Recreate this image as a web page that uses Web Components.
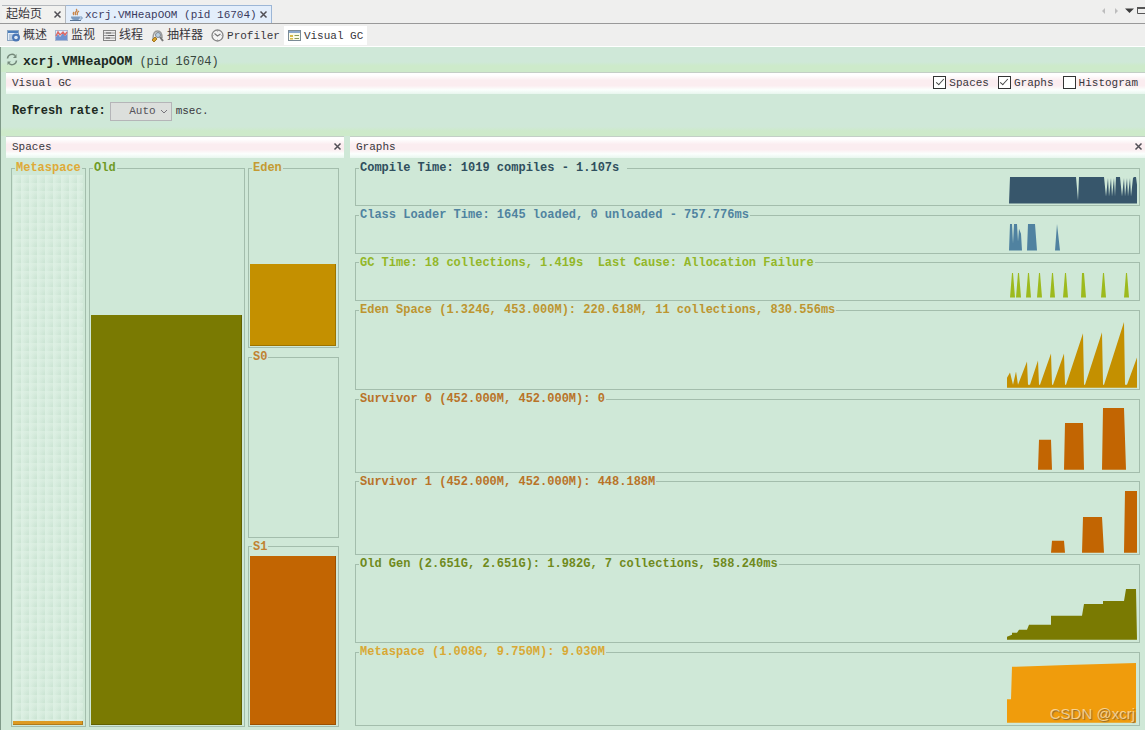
<!DOCTYPE html>
<html lang="zh-CN">
<head>
<meta charset="utf-8">
<title>VisualVM</title>
<style>
  html, body { margin: 0; height: 100%; }
  body {
    font: 11px/14px "Liberation Mono", "Noto Sans CJK SC", monospace;
    color: #38363c;
    background: #cfe8d7;
    --line: #a3bdac;
    --page: #cfe8d7;
  }
</style>
</head>
<body>
<vm-app></vm-app>

<script>
const define = (name, html, setup) => {
  const template = document.createElement('template');
  template.innerHTML = html;
  customElements.define(name, class extends HTMLElement {
    constructor() {
      super();
      this.attachShadow({ mode: 'open' }).append(template.content.cloneNode(true));
    }
    connectedCallback() { if (setup) setup(this, this.shadowRoot); }
  });
};

const ICONS = {
  java: '<path d="M1 8.500h9c0 3-1 3.500-4 3.500S1 11.500 1 8.500z" fill="#7d9cc0"/><path d="M0 12.500h11" stroke="#5a7595"/><path d="M10 9h2v2h-2" fill="none" stroke="#7d9cc0"/><path d="M6 1c3 2-3 3 0 6M9 3C6 5 8 6 7 7M4 4c-1 1-1 2 0 3" fill="none" stroke="#c98548" stroke-width="1.300"/>',
  overview: '<rect x=".5" y="1.500" width="11" height="10" fill="#e4edf8" stroke="#8ba5c2"/><path d="M1 3h10" stroke="#4c7dbb" stroke-width="2"/><path d="M2 6h4M2 8h3M2 10h3" stroke="#8da6c4"/><circle cx="9" cy="8.500" r="4" fill="#4a76b5"/><circle cx="9" cy="8.500" r="1.800" fill="#dfe9f5"/>',
  monitor: '<rect x=".5" y="1.500" width="12" height="10" fill="#e8eefa" stroke="#a9b8d2"/><path d="M1 11V8l2-3 2 3 3-4 2 3 2-2v6z" fill="#6f91cf"/><path d="M1 7l2-4 2 3 3-3 2 3 2-3" fill="none" stroke="#dc6a67" stroke-width="1.400"/>',
  threads: '<rect x=".5" y="1.500" width="12" height="10" fill="#eee" stroke="#858585"/><path d="M1 4h11M1 6.500h11M1 9h11" stroke="#999"/><path d="M3 4h5M5 6.500h6M3 9h4" stroke="#666"/>',
  sampler: '<path d="M2 10c0-4 1-8 4.500-8S11 6 11 9" fill="#eee" stroke="#999" stroke-width="1.500"/><circle cx="7" cy="6" r="2.500" fill="#bcd0e2" stroke="#7c858e"/><path d="M1 11l3-3 2 2-3 3z" fill="#d7a32e" stroke="#a57722"/><path d="M9 8l3 4" stroke="#777" stroke-width="2"/>',
  profiler: '<circle cx="6.500" cy="6.500" r="5.500" fill="#f4f4f4" stroke="#858585" stroke-width="1.300"/><path d="M3.500 4.500l3 2.500 3-2" fill="none" stroke="#777" stroke-width="1.200"/><path d="M6.500 1.500v1M6.500 10.500v1M1.500 6.500h1M10.500 6.500h1" stroke="#999"/>',
  gc: '<rect x=".5" y="1.500" width="12" height="10" fill="#fafbe8" stroke="#7b8b96"/><path d="M1 3h11" stroke="#8aa8cc" stroke-width="2"/><path d="M2 6h3v2H2zM2 9h3v1.500H2z" fill="#d6b944"/><path d="M6.500 6.500H11M6.500 9.500H11" stroke="#8a9c58"/>',
  refresh: '<path d="M1.500 5.500A4.500 4.500 0 0 1 9 2.500M10.500 7.500A4.500 4.500 0 0 1 3 10.500" fill="none" stroke="#74897a" stroke-width="1.500"/><path d="M10.500 1V5H7zM1.500 12V8.500h3.500z" fill="#74897a"/>',
  close: '<path d="M3.500 3.500l6 6M9.500 3.500l-6 6" stroke="#514f55" stroke-width="1.500"/>',
  left: '<path d="M8 4v6L5 7z" fill="#bdbdbd"/>',
  right: '<path d="M5 4v6l3-3z" fill="#bdbdbd"/>',
  down: '<path d="M2 4.500h9L6.500 9z" fill="#3c3c3c"/>',
  maximize: '<path d="M1.500 4.500h9v5h-9z" fill="none" stroke="#555"/><path d="M1 4h10" stroke="#555" stroke-width="2"/>'
};

define('vm-icon', `
  <style>:host { display: block; width: 13px; height: 13px; flex: none; } svg { display: block; }</style>
  <svg width="13" height="13" viewBox="0 0 13 13" aria-hidden="true"></svg>`,
  (host, root) => { root.querySelector('svg').innerHTML = ICONS[host.getAttribute('name')]; });

define('vm-close', `
  <style>
    :host { display: block; flex: none; }
    button { display: block; border: 0; padding: 0; background: none; }
  </style>
  <button aria-label="Close"><vm-icon name="close"></vm-icon></button>`);

/* Document tab with a close button */
define('vm-doc-tab', `
  <style>
    :host { display: flex; align-items: center; gap: 3px; box-sizing: border-box; padding: 0 1px 0 4px;
      border: solid #b4b8bd; border-width: 1px 1px 0 0; background: #f1f1ef; }
    :host([active]) { gap: 0; background: #e3eefb; border-color: #9cb6d6; color: #3a3a5e; }
    button { display: flex; align-items: center; gap: 2px; border: 0; padding: 0; background: none;
      color: inherit; font: inherit; white-space: nowrap; }
    :host(:not([active])) button { font-size: 12px; padding-right: 6px; }
  </style>
  <button><slot></slot></button><vm-close></vm-close>`);

/* View tab: icon and label */
define('vm-view-tab', `
  <style>
    :host { display: flex; }
    button { display: flex; align-items: center; gap: 3px; border: 0; padding: 0 4px; background: none;
      color: inherit; font: inherit; white-space: nowrap; }
    :host([cjk]) button { font-size: 12px; }
    :host([active]) button { background: #fff; }
  </style>
  <button><vm-icon></vm-icon><slot></slot></button>`,
  (host, root) => {
    const old = root.querySelector('vm-icon');
    const icon = document.createElement('vm-icon');
    icon.setAttribute('name', host.getAttribute('icon'));
    old.replaceWith(icon);
  });

/* Pale title bar shared by the view and its two panels */
define('vm-bar', `
  <style>
    :host { display: flex; align-items: center; justify-content: space-between; height: 22px; box-sizing: border-box;
      padding: 0 0 2px 6px; border-top: 1px solid #c3cfc6;
      background: linear-gradient(#fff 0 10%, #fbedf0 35% 60%, #fbfffd 80%, #e8f6ee); }
    h2 { margin: 0; font: inherit; }
  </style>
  <h2><slot></slot></h2><slot name="end"></slot>`);

define('vm-check', `
  <style>
    :host { display: block; }
    label { display: flex; align-items: center; gap: 3px; }
    input { appearance: none; display: grid; place-items: center; width: 13px; height: 13px; margin: 0;
      border: 1px solid #333; background: #fff; }
    input:checked::after { content: ""; width: 7px; height: 3px; margin-bottom: 3px;
      border: solid #444; border-width: 0 0 1px 1px; transform: rotate(-48deg); }
  </style>
  <label><input type="checkbox"><slot></slot></label>`,
  (host, root) => { root.querySelector('input').checked = host.hasAttribute('checked'); });

/* Titled frame */
define('vm-group', `
  <style>
    :host { display: flex; min-width: 0; min-height: 0; }
    fieldset { flex: 1; display: flex; align-items: flex-end; justify-content: flex-end; min-width: 0; min-height: 0; margin: 0;
      padding: 0 2px 1px 1px; border: 1px solid var(--line); }
    legend { height: 14px; margin-left: 2px; padding: 0 1px; font: bold 12px/14px "Liberation Mono", monospace;
      color: var(--ink); white-space: pre; }
  </style>
  <fieldset><legend></legend><slot></slot></fieldset>`,
  (host, root) => {
    root.querySelector('legend').textContent = host.getAttribute('label');
    host.style.setProperty('--ink', host.getAttribute('ink'));
  });

/* Memory pool: a frame filled up to a level */
define('vm-space', `
  <style>
    :host { display: grid; min-height: 0; min-width: 0; }
    .well { display: flex; align-items: flex-end; width: 100%; height: 100%; }
    :host([reserved]) .well { background: repeating-linear-gradient(#dff1e599 0 1px, transparent 7px 8px),
      repeating-linear-gradient(90deg, #dbefe2 0 1px, #cce5d4 7px 8px); }
    .fill { flex: 1; box-sizing: border-box; border: solid #0003; border-width: 0 1px 1px 0; }
    :host([level="0"]) .fill { border: 0; }
  </style>
  <vm-group><div class="well"><div class="fill"></div></div></vm-group>`,
  (host, root) => {
    const fresh = document.createElement('vm-group');
    fresh.setAttribute('label', host.getAttribute('label'));
    fresh.setAttribute('ink', host.getAttribute('ink'));
    const old = root.querySelector('vm-group');
    fresh.append(...old.childNodes);
    old.replaceWith(fresh);
    const fill = root.querySelector('.fill');
    fill.style.height = host.getAttribute('level') + '%';
    fill.style.background = host.getAttribute('color');
  });

/* History chart */
define('vm-graph', `
  <style>
    :host { display: grid; min-height: 0; min-width: 0; }
    svg { display: block; width: 130px; height: 100%; min-height: 0; }
  </style>`,
  (host, root) => {
    const group = document.createElement('vm-group');
    group.setAttribute('label', host.getAttribute('label'));
    group.setAttribute('ink', host.getAttribute('ink'));
    group.innerHTML = `<svg viewBox="0 0 130 ${host.getAttribute('units')}" preserveAspectRatio="none" aria-hidden="true">
      <path d="${host.getAttribute('path')}" fill="${host.getAttribute('color')}"/></svg>`;
    root.append(group);
  });

define('vm-spaces', `
  <style>
    :host { display: flex; flex-direction: column; min-width: 0; min-height: 0; }
    .pools { flex: 1; min-height: 0; display: grid; grid-template-columns: 75fr 156fr 91fr; gap: 3px; padding: 3px 5px; }
    .young { display: grid; grid-template-rows: repeat(3, 1fr); gap: 2px; min-height: 0; }
  </style>
  <vm-bar>Spaces<vm-close slot="end"></vm-close></vm-bar>
  <div class="pools">
    <vm-space reserved label="Metaspace" ink="#dfaa38" color="#dd9a22" level="0.8"></vm-space>
    <vm-space label="Old" ink="#6f9a25" color="#7a7a02" level="74.500"></vm-space>
    <div class="young">
      <vm-space label="Eden" ink="#c49a32" color="#c49000" level="48"></vm-space>
      <vm-space label="S0" ink="#c08232" color="#c26502" level="0"></vm-space>
      <vm-space label="S1" ink="#c08232" color="#c26502" level="98.500"></vm-space>
    </div>
  </div>`,
  null);

const gcTicks = [5, 11, 21, 32, 45, 58, 76, 96, 119]
  .map((x, i) => `M${x - 2} 28L${x - (i === 6 ? 1 : 0)} 3h${i === 6 ? 2 : 1}L${x + 3} 28z`).join('');

const GRAPHS = [
  ['Compile Time: 1019 compiles - 1.107s ', '#2f4f5e', '#37566b', 30,
   'M2 29L3 2H69L71 26L72 2H97L99 22L101 3L102 22L104 3L105 22L107 3L108 22L109 2H113L115 22L117 3L118 22L120 3L121 22L123 3L124 22L126 3L127 2H129L130 10V29z'],
  ['Class Loader Time: 1645 loaded, 0 unloaded - 757.776ms', '#4f83a0', '#5082a0', 30,
   'M2 29L3 2H5L6 22L7 2H10L11 20L12 7L14 12L15 29zM20 29L21 2H28L30 29zM48 29L50 2L53 29z'],
  ['GC Time: 18 collections, 1.419s  Last Cause: Allocation Failure', '#93b728', '#9dba1d', 30, gcTicks],
  ['Eden Space (1.324G, 453.000M): 220.618M, 11 collections, 830.556ms', '#bd9530', '#c49000', 70,
   'M0 70V60L3 55L6 67L9 54L11 67L20 44L21 67H23L31 43L32 67H33L44 36L45 67H46L57 36L58 67H59L76 16L77 67H78L95 15L96 67H97L117 5L118 67H120L130 40V70z'],
  ['Survivor 0 (452.000M, 452.000M): 0', '#b97328', '#c26502', 65,
   'M31 64L32 34H44L45 64zM57 64L58 17H76L77 64zM95 64L96 2H117L119 64z'],
  ['Survivor 1 (452.000M, 452.000M): 448.188M', '#b97328', '#c26502', 65,
   'M44 64L45 52H57L58 64zM75 64L76 28H95L97 64zM117 64L118 2H130V64z'],
  ['Old Gen (2.651G, 2.651G): 1.982G, 7 collections, 588.240ms', '#6f8a1c', '#7a7a02', 70,
   'M0 69V66L5 64V62H10L12 59H20L22 54H44V45H75L77 33H96V30H117L119 18H129L130 69z'],
  ['Metaspace (1.008G, 9.750M): 9.030M', '#d9a834', '#f09c0c', 66,
   'M0 65V41H4L5 8L60 6L129 4V65z']
];

define('vm-graphs', `
  <style>
    :host { display: flex; flex-direction: column; min-width: 0; min-height: 0; }
    .list { flex: 1; min-height: 0; display: grid; gap: 2px; padding: 3px 5px 4px;
      grid-template-rows: 45fr 45fr 45fr 86fr 80fr 80fr 85fr 80fr; }
  </style>
  <vm-bar>Graphs<vm-close slot="end"></vm-close></vm-bar>
  <div class="list"></div>`,
  (host, root) => {
    for (const [label, ink, color, units, path] of GRAPHS) {
      const graph = document.createElement('vm-graph');
      for (const [key, value] of Object.entries({ label, ink, color, units, path })) graph.setAttribute(key, value);
      root.querySelector('.list').append(graph);
    }
  });

define('vm-app', `
  <style>
    :host { display: flex; flex-direction: column; height: 100vh; min-height: 640px; position: relative; overflow: hidden; }
    .docs { display: flex; justify-content: space-between; height: 24px; box-sizing: border-box; padding-top: 5px;
      border-bottom: 1px solid #999; background: #efefee; }
    .tabs { display: flex; padding-left: 2px; }
    .tools { display: flex; height: 13px; margin-top: -1px; margin-right: -4px; }
    .tools button { display: block; border: 0; padding: 0; background: none; }
    nav { display: flex; height: 23px; box-sizing: border-box; padding: 2px 0 1px 3px; background: #efefee; border-bottom: 1px solid #fff; }
    main { flex: 1; min-height: 0; display: flex; flex-direction: column; border-left: 1px solid #7f9a89; padding-left: 5px;
      box-sizing: border-box; }
    header { display: flex; align-items: center; height: 25px; margin-left: -5px; padding-left: 5px;
      background: linear-gradient(#cfe8d8 60%, #cdeaca 75%); }
    header h1 { margin: 4px 0 0 4px; font-size: 13px; line-height: 16px; color: #1c2a1f; }
    header h1 span { font-size: 12px; font-weight: normal; color: #37463b; }
    .checks { display: flex; gap: 9px; padding-right: 7px; }
    .rate { display: flex; align-items: center; gap: 4px; height: 42px; padding: 0 0 8px 11px; box-sizing: border-box;
      margin-left: -5px; background: linear-gradient(#cfe8d8 78%, #cdeaca 88%); }
    .rate label { font-weight: bold; font-size: 12px; color: #1c2a1f; }
    .pick { position: relative; }
    select { appearance: none; display: block; width: 62px; height: 19px; margin: 0; padding: 0 15px 0 0; border: 1px solid #b5b5b8;
      border-radius: 0; background: #dcdfdc; color: #55535a; font: inherit; text-align: right; text-align-last: right; }
    .pick svg { position: absolute; right: 4px; top: 7px; pointer-events: none; }
    .panels { flex: 1; min-height: 0; display: grid; grid-template-columns: 338fr 795fr; gap: 6px; }
    .mark { position: absolute; right: 10px; bottom: 6px; font: 15px/20px "Liberation Sans", sans-serif; color: #ffe6bcc0;
      text-shadow: 1px 1px 1px #8a6630; }
  </style>
  <div class="docs">
    <div class="tabs">
      <vm-doc-tab>起始页</vm-doc-tab>
      <vm-doc-tab active><vm-icon name="java"></vm-icon>xcrj.VMHeapOOM (pid 16704)</vm-doc-tab>
    </div>
    <div class="tools">
      <button aria-label="Previous"><vm-icon name="left"></vm-icon></button>
      <button aria-label="Next"><vm-icon name="right"></vm-icon></button>
      <button aria-label="List"><vm-icon name="down"></vm-icon></button>
      <button aria-label="Maximize"><vm-icon name="maximize"></vm-icon></button>
    </div>
  </div>
  <nav>
    <vm-view-tab cjk icon="overview">概述</vm-view-tab>
    <vm-view-tab cjk icon="monitor">监视</vm-view-tab>
    <vm-view-tab cjk icon="threads">线程</vm-view-tab>
    <vm-view-tab cjk icon="sampler">抽样器</vm-view-tab>
    <vm-view-tab icon="profiler">Profiler</vm-view-tab>
    <vm-view-tab active icon="gc">Visual GC</vm-view-tab>
  </nav>
  <main>
    <header><vm-icon name="refresh"></vm-icon><h1>xcrj.VMHeapOOM<span> (pid 16704)</span></h1></header>
    <vm-bar>Visual GC
      <div class="checks" slot="end">
        <vm-check checked>Spaces</vm-check><vm-check checked>Graphs</vm-check><vm-check>Histogram</vm-check>
      </div>
    </vm-bar>
    <div class="rate">
      <label for="rate">Refresh rate:</label>
      <div class="pick">
        <select id="rate"><option>Auto</option></select>
        <svg width="8" height="5" viewBox="0 0 8 5" aria-hidden="true"><path d="M1 1l3 3 3-3" fill="none" stroke="#77757c"/></svg>
      </div>
      <span>msec.</span>
    </div>
    <div class="panels"><vm-spaces></vm-spaces><vm-graphs></vm-graphs></div>
  </main>
  <div class="mark">CSDN @xcrj</div>`);
</script>
</body>
</html>
